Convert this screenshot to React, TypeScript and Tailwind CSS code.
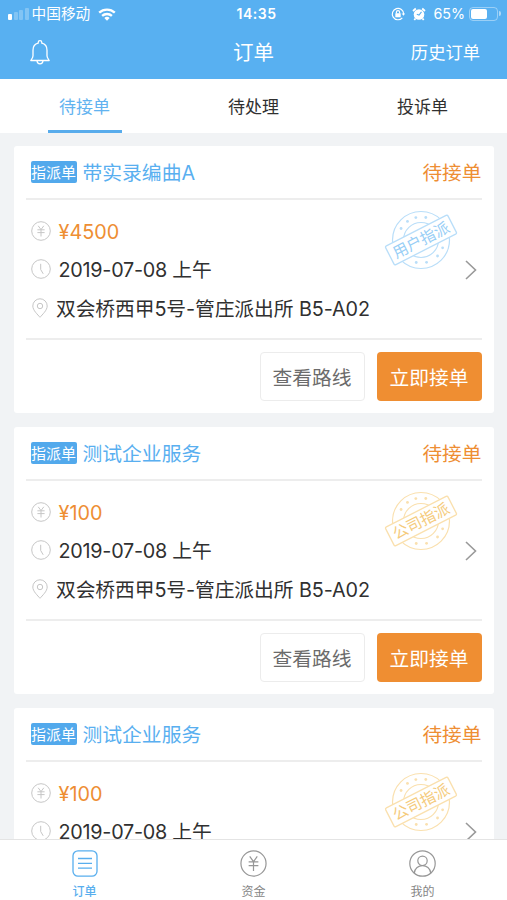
import type { ReactNode } from 'react';

type Order = { title: string; price: string; stamp: string; tone: 'blue' | 'gold' };

const orders: Order[] = [
  { title: '带实录编曲A', price: '¥4500', stamp: '用户指派', tone: 'blue' },
  { title: '测试企业服务', price: '¥100', stamp: '公司指派', tone: 'gold' },
  { title: '测试企业服务', price: '¥100', stamp: '公司指派', tone: 'gold' },
];

function YenIcon({ className }: { className: string }) {
  return (
    <svg viewBox="0 0 20 20" className={className} fill="none" stroke="currentColor">
      <circle cx="10" cy="10" r="9.3" />
      <path d="M7.2 4.8 10 8.6l2.8-3.8M6.4 8.8h7.2M6.4 11.6h7.2M10 8.6v6.9" />
    </svg>
  );
}

function ClockIcon() {
  return (
    <svg viewBox="0 0 20 20" className="size-5 text-[#c6c6c6]" fill="none" stroke="currentColor">
      <circle cx="10" cy="10" r="9.3" />
      <path d="M9.7 4.8v5.7l2.5 4.3" />
    </svg>
  );
}

function PinIcon() {
  return (
    <svg viewBox="0 0 16 20" className="h-5 w-4 text-[#c6c6c6]" fill="none" stroke="currentColor">
      <path d="M8 19.3C5.8 16.7.8 12.3.8 8a7.2 7.2 0 0 1 14.4 0c0 4.3-5 8.7-7.2 11.300Z" />
      <circle cx="8" cy="8" r="2.7" />
    </svg>
  );
}

const starAngles = [-150, -126, -103, -78, 20, 44, 76, 102];

function Stamp({ text, tone }: { text: string; tone: Order['tone'] }) {
  return (
    <svg
      viewBox="-37 -30 74 60"
      className={`h-[60px] w-[74px] ${tone === 'blue' ? 'text-[#b9def9]' : 'text-[#fae0ae]'}`}
      fill="none"
      stroke="currentColor"
    >
      <circle r="28.5" strokeWidth="1.2" />
      <circle r="17.5" strokeWidth="1.1" />
      {starAngles.map((a) => (
        <circle
          key={a}
          cx={23 * Math.cos((a * Math.PI) / 180)}
          cy={23 * Math.sin((a * Math.PI) / 180)}
          r="1.4"
          fill="currentColor"
          stroke="none"
        />
      ))}
      <g transform="rotate(-27)">
        <rect x="-35" y="-10.5" width="70" height="21" rx="1.5" fill="white" strokeWidth="1.3" />
        <text
          y="5.5"
          textAnchor="middle"
          stroke="none"
          className={`text-[15.3px] ${tone === 'blue' ? 'fill-[#97cef6]' : 'fill-[#f5cb7c]'}`}
        >
          {text}
        </text>
      </g>
    </svg>
  );
}

function Row({ icon, children }: { icon: ReactNode; children: ReactNode }) {
  return (
    <div className="flex h-[38.3px] items-center whitespace-nowrap">
      {icon}
      {children}
    </div>
  );
}

function OrderCard({ order }: { order: Order }) {
  return (
    <article className="h-[267px] shrink-0 rounded-[3px] bg-white px-3 text-[19.8px] leading-[26px] text-[#303030]">
      <header className="flex h-[54px] items-center border-b-2 border-[#ededed] pl-[5px]">
        <span className="flex h-[22px] w-[46px] items-center justify-center rounded-[2px] bg-[#52a9ec] text-[15px] leading-none whitespace-nowrap text-white">
          指派单
        </span>
        <h2 className="ml-1.5 pt-[2px] text-[#59aff0]">{order.title}</h2>
        <span className="ml-auto pt-[2px] text-[19.7px] text-[#ee8e33]">待接单</span>
      </header>
      <div className="relative h-[140px] border-b-2 border-[#ededed] pt-3 pl-[5px]">
        <Row icon={<YenIcon className="size-5 text-[#c6c6c6]" />}>
          <span className="ml-2 pt-[2px] text-[#ee8e33]">{order.price}</span>
        </Row>
        <Row icon={<ClockIcon />}>
          <span className="ml-2 pt-[2px] tracking-[-0.25px]">2019-07-08 上午</span>
        </Row>
        <Row icon={<span className="ml-[1px]"><PinIcon /></span>}>
          <span className="ml-[8.5px] pt-[2px] tracking-[-0.1px]">双会桥西甲5号-管庄派出所 B5-A02</span>
        </Row>
        <div className="absolute top-[10px] right-[24px]">
          <Stamp text={order.stamp} tone={order.tone} />
        </div>
        <svg viewBox="0 0 12 20" className="absolute top-[60px] right-[5px] h-5 w-3" fill="none" stroke="#999" strokeWidth="1.6">
          <path d="m1 1 9.500 9L1 19" />
        </svg>
      </div>
      <footer className="flex justify-end gap-3 pt-3">
        <button className="h-[49px] w-[105px] rounded border border-[#ececec] pt-[2px] text-[#6b6b6b]">查看路线</button>
        <button className="h-[49px] w-[105px] rounded bg-[#ef8e32] pt-[2px] text-white">立即接单</button>
      </footer>
    </article>
  );
}

function StatusBar() {
  return (
    <div className="relative flex h-7 items-center pr-[6px] pl-2 text-[14.7px]">
      <div className="flex h-3 items-end gap-[1.5px]">
        <i className="h-[6px] w-[4px] rounded-[1px] bg-white" />
        <i className="h-2 w-[4px] rounded-[1px] bg-white/25" />
        <i className="h-2.5 w-[4px] rounded-[1px] bg-white/25" />
        <i className="h-3 w-[4px] rounded-[1px] bg-white/25" />
      </div>
      <span className="ml-[3px] pt-px">中国移动</span>
      <svg viewBox="0 0 18 13" className="ml-2 h-[13px] w-[18px]" fill="none" stroke="white" strokeWidth="2.3">
        <path d="M1.2 4.7a11.3 11.3 0 0 1 15.6 0M4.1 7.9a7.2 7.2 0 0 1 9.8 0" />
        <path d="M9 12.7 6.3 10a4 4 0 0 1 5.4 0Z" fill="white" stroke="none" />
      </svg>
      <span className="absolute inset-x-0 pl-[6px] text-center text-[14px] font-semibold tracking-[0.5px]">14:35</span>
      <div className="ml-auto flex items-center">
        <svg viewBox="0 0 14 14" className="size-[14px]" fill="none" stroke="white" strokeWidth="1.2">
          <path d="M11.3 10.8A5.7 5.7 0 1 1 12.7 7" />
          <path d="m10.5 6.5 2.2 2.3L14 6.5Z" fill="white" stroke="none" />
          <rect x="4.3" y="6.2" width="5.4" height="4" rx=".5" fill="white" stroke="none" />
          <path d="M5.4 6.5V5.2a1.6 1.6 0 0 1 3.2 0v1.300" />
        </svg>
        <svg viewBox="0 0 14 14" className="ml-[7px] size-[14px]" fill="none" stroke="white">
          <circle cx="7" cy="7.5" r="5.3" fill="white" stroke="none" />
          <path d="M1 4 3.800 1.500M13 4l-2.800-2.500M3.500 11.500 2.300 13M10.500 11.500l1.200 1.500" strokeWidth="1.8" />
          <path d="M9.500 4.800 7 8 4.800 7.300" stroke="#58b0f1" strokeWidth="1.1" />
        </svg>
        <span className="ml-[7px] text-[14.3px]">65%</span>
        <div className="ml-[4px] flex h-[14px] w-[29px] rounded-[4px] border border-white/40 p-[1px]">
          <div className="w-4 rounded-[2px] bg-white" />
        </div>
        <i className="ml-[1px] h-[5px] w-[2px] rounded-r bg-white/50" />
      </div>
    </div>
  );
}

export default function App() {
  return (
    <div className="flex h-[900px] w-[507px] flex-col overflow-hidden bg-[#f1f3f5] font-[Inter,'Noto_Sans_CJK_SC',sans-serif] leading-none">
      <header className="h-[79px] shrink-0 bg-[#58b0f1] text-white">
        <StatusBar />
        <div className="grid h-[49px] grid-cols-3 items-center pr-[27px] pl-[30px]">
          <svg viewBox="0 0 20 25" className="h-[25px] w-5" fill="none" stroke="white" strokeWidth="1.3" strokeLinejoin="round">
            <path d="M8.2 3.2V2.5a1.8 1.8 0 0 1 3.6 0v.7c3.300.8 5.200 3.500 5.200 7v5.500c0 1.800 1 2.800 2.200 4.800H.8C2 18.500 3 17.500 3 15.700v-5.500c0-3.500 1.900-6.200 5.200-7Z" />
            <path d="M7 20.7c.2 4.100 5.800 4.100 6 0" />
          </svg>
          <h1 className="pt-[2px] pr-[3px] text-center text-[20.5px]">订单</h1>
          <span className="pt-px text-right text-[17.3px]">历史订单</span>
        </div>
      </header>
      <nav className="grid h-[54px] shrink-0 grid-cols-3 bg-white text-[17px] text-[#303030]">
        <div className="flex justify-center">
          <span className="flex w-[74px] items-center justify-center border-b-[3px] border-[#58acec] pt-[5px] text-[#62b3f0]">待接单</span>
        </div>
        <span className="flex items-center justify-center pt-[2px]">待处理</span>
        <span className="flex items-center justify-center pt-[2px]">投诉单</span>
      </nav>
      <main className="flex min-h-0 flex-1 flex-col gap-[14px] overflow-hidden px-[13.5px] pt-[13px]">
        {orders.map((order, i) => (
          <OrderCard key={i} order={order} />
        ))}
      </main>
      <nav className="grid h-[61px] shrink-0 grid-cols-3 border-t border-[#e4e4e4] bg-white text-[12px] leading-[18px] text-[#858585]">
        <div className="flex flex-col items-center gap-[6px] pt-[10px] text-[#58aeee]">
          <svg viewBox="0 0 26 27" className="h-[27px] w-[26px]" fill="none" stroke="currentColor" strokeWidth="1.3">
            <rect x="1" y=".8" width="24" height="25.4" rx="5" />
            <path d="M6 8.500h14M6 13.300h14M6 18.100h14" />
          </svg>
          <span className="font-medium">订单</span>
        </div>
        <div className="flex flex-col items-center gap-[6px] pt-[10px]">
          <YenIcon className="size-[27px] stroke-[0.9] text-[#979797]" />
          <span>资金</span>
        </div>
        <div className="flex flex-col items-center gap-[6px] pt-[10px]">
          <svg viewBox="0 0 27 27" className="size-[27px] text-[#979797]" fill="none" stroke="currentColor" strokeWidth="1.2">
            <circle cx="13.5" cy="13.5" r="12.7" />
            <circle cx="13.5" cy="10.8" r="4.7" />
            <path d="M5.300 23.200c.7-10 15.700-10 16.400 0" />
          </svg>
          <span>我的</span>
        </div>
      </nav>
    </div>
  );
}
